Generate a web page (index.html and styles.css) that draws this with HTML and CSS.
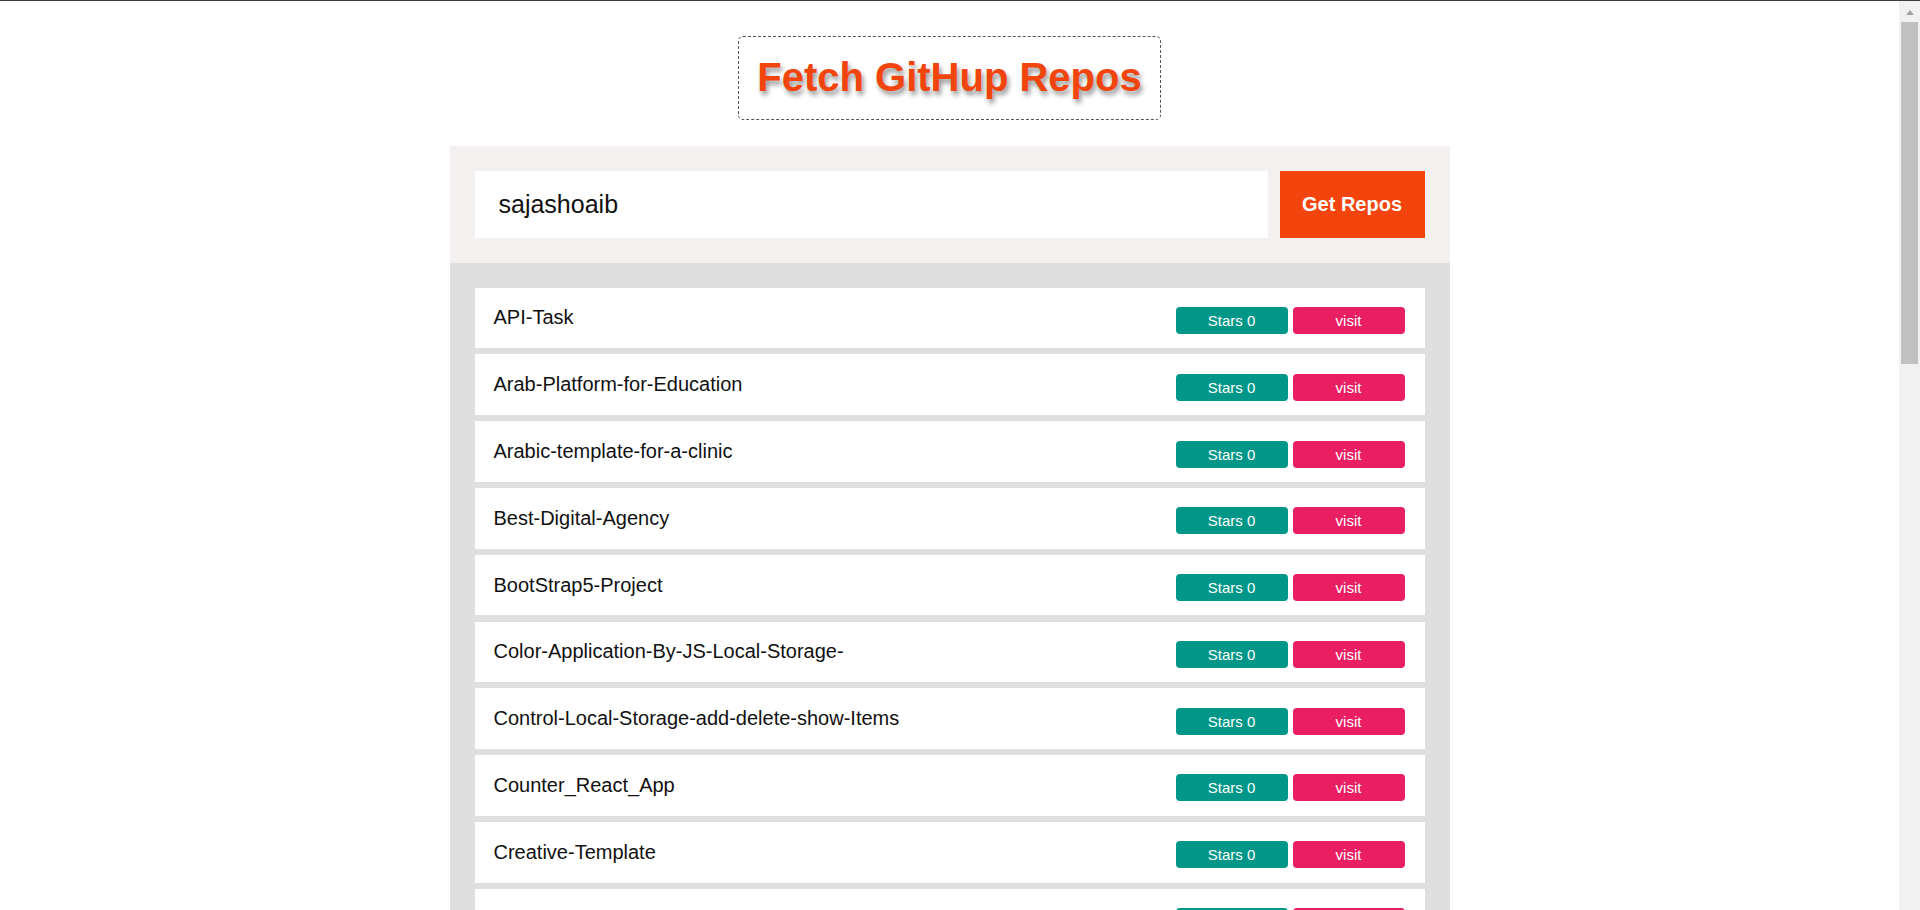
FILE: index.html
```html
<!DOCTYPE html>
<html lang="en">
<head>
<meta charset="UTF-8">
<title>Fetch GitHup Repos</title>
<link rel="stylesheet" href="styles.css">
</head>
<body>
<div class="scrollbar" aria-hidden="true">
  <span class="scroll-arrow"></span>
  <span class="scroll-thumb"></span>
</div>
<header class="header">
  <h1 class="title">Fetch GitHup Repos</h1>
</header>
<main class="container">
  <div class="get-repos">
    <input class="username" type="text" value="sajashoaib">
    <span class="get-button">Get Repos</span>
  </div>
  <div class="show-data">
    <div class="repo-box"><span class="repo-name">API-Task</span><div class="repo-actions"><span class="stars">Stars 0</span><a class="visit">visit</a></div></div>
    <div class="repo-box"><span class="repo-name">Arab-Platform-for-Education</span><div class="repo-actions"><span class="stars">Stars 0</span><a class="visit">visit</a></div></div>
    <div class="repo-box"><span class="repo-name">Arabic-template-for-a-clinic</span><div class="repo-actions"><span class="stars">Stars 0</span><a class="visit">visit</a></div></div>
    <div class="repo-box"><span class="repo-name">Best-Digital-Agency</span><div class="repo-actions"><span class="stars">Stars 0</span><a class="visit">visit</a></div></div>
    <div class="repo-box"><span class="repo-name">BootStrap5-Project</span><div class="repo-actions"><span class="stars">Stars 0</span><a class="visit">visit</a></div></div>
    <div class="repo-box"><span class="repo-name">Color-Application-By-JS-Local-Storage-</span><div class="repo-actions"><span class="stars">Stars 0</span><a class="visit">visit</a></div></div>
    <div class="repo-box"><span class="repo-name">Control-Local-Storage-add-delete-show-Items</span><div class="repo-actions"><span class="stars">Stars 0</span><a class="visit">visit</a></div></div>
    <div class="repo-box"><span class="repo-name">Counter_React_App</span><div class="repo-actions"><span class="stars">Stars 0</span><a class="visit">visit</a></div></div>
    <div class="repo-box"><span class="repo-name">Creative-Template</span><div class="repo-actions"><span class="stars">Stars 0</span><a class="visit">visit</a></div></div>
    <div class="repo-box"><span class="repo-name">Digital-Clock</span><div class="repo-actions"><span class="stars">Stars 0</span><a class="visit">visit</a></div></div>
    <div class="repo-box"><span class="repo-name">E-commerce-Landing-Page</span><div class="repo-actions"><span class="stars">Stars 0</span><a class="visit">visit</a></div></div>
    <div class="repo-box"><span class="repo-name">Fetch-GitHub-Repos</span><div class="repo-actions"><span class="stars">Stars 0</span><a class="visit">visit</a></div></div>
    <div class="repo-box"><span class="repo-name">Form-Validation</span><div class="repo-actions"><span class="stars">Stars 0</span><a class="visit">visit</a></div></div>
    <div class="repo-box"><span class="repo-name">Image-Slider</span><div class="repo-actions"><span class="stars">Stars 0</span><a class="visit">visit</a></div></div>
    <div class="repo-box"><span class="repo-name">Kasper-Template</span><div class="repo-actions"><span class="stars">Stars 0</span><a class="visit">visit</a></div></div>
    <div class="repo-box"><span class="repo-name">Landing-Page</span><div class="repo-actions"><span class="stars">Stars 0</span><a class="visit">visit</a></div></div>
    <div class="repo-box"><span class="repo-name">Leon-Template</span><div class="repo-actions"><span class="stars">Stars 0</span><a class="visit">visit</a></div></div>
    <div class="repo-box"><span class="repo-name">Memory-Game</span><div class="repo-actions"><span class="stars">Stars 0</span><a class="visit">visit</a></div></div>
    <div class="repo-box"><span class="repo-name">Portfolio</span><div class="repo-actions"><span class="stars">Stars 0</span><a class="visit">visit</a></div></div>
    <div class="repo-box"><span class="repo-name">Quiz-App</span><div class="repo-actions"><span class="stars">Stars 0</span><a class="visit">visit</a></div></div>
    <div class="repo-box"><span class="repo-name">React-Todo-App</span><div class="repo-actions"><span class="stars">Stars 0</span><a class="visit">visit</a></div></div>
    <div class="repo-box"><span class="repo-name">Responsive-Website</span><div class="repo-actions"><span class="stars">Stars 0</span><a class="visit">visit</a></div></div>
    <div class="repo-box"><span class="repo-name">Sass-Project</span><div class="repo-actions"><span class="stars">Stars 0</span><a class="visit">visit</a></div></div>
    <div class="repo-box"><span class="repo-name">Shopping-Cart</span><div class="repo-actions"><span class="stars">Stars 0</span><a class="visit">visit</a></div></div>
    <div class="repo-box"><span class="repo-name">Special-Design</span><div class="repo-actions"><span class="stars">Stars 0</span><a class="visit">visit</a></div></div>
    <div class="repo-box"><span class="repo-name">Tailwind-Project</span><div class="repo-actions"><span class="stars">Stars 0</span><a class="visit">visit</a></div></div>
    <div class="repo-box"><span class="repo-name">Templates-Zero</span><div class="repo-actions"><span class="stars">Stars 0</span><a class="visit">visit</a></div></div>
    <div class="repo-box"><span class="repo-name">Todo-List</span><div class="repo-actions"><span class="stars">Stars 0</span><a class="visit">visit</a></div></div>
    <div class="repo-box"><span class="repo-name">Typing-Speed-Game</span><div class="repo-actions"><span class="stars">Stars 0</span><a class="visit">visit</a></div></div>
    <div class="repo-box"><span class="repo-name">Weather-App</span><div class="repo-actions"><span class="stars">Stars 0</span><a class="visit">visit</a></div></div>
  </div>
</main>
</body>
</html>
```
FILE: styles.css
```css
html {
  border-top: 1px solid #3b3b3b;
}
* {
  box-sizing: border-box;
}
body {
  margin: 0;
  padding-right: 21px;
  font-family: "Liberation Sans", Arial, sans-serif;
  background: #ffffff;
  color: #111;
}

/* window scrollbar drawn over the page edge */
.scrollbar {
  position: fixed;
  top: 1px;
  right: 0;
  bottom: 0;
  width: 21px;
  display: flex;
  flex-direction: column;
  align-items: center;
  padding-top: 9px;
  background: #f1f1f1;
  z-index: 10;
}
.scroll-arrow {
  width: 0;
  height: 0;
  border-left: 4.5px solid transparent;
  border-right: 4.5px solid transparent;
  border-bottom: 5px solid #a3a3a3;
}
.scroll-thumb {
  width: 17px;
  height: 342px;
  margin-top: 7px;
  background: #c1c1c1;
}

.header {
  display: flex;
  justify-content: center;
  padding-top: 35px;
  margin-bottom: 26px;
}
.title {
  margin: 0;
  padding: 18px 18px 19px;
  font-size: 40px;
  font-weight: bold;
  line-height: normal;
  color: #f2450d;
  border: 1px dashed #555;
  border-radius: 5px;
  text-shadow: 2px 4px 5px rgba(0, 0, 0, 0.42);
}
.container {
  width: 1000px;
  margin: 0 auto;
}
.get-repos {
  display: flex;
  gap: 12px;
  padding: 25px;
  background: #f3f0ef;
}
.username {
  flex: 1;
  height: 66.7px;
  border: none;
  outline: none;
  padding: 0 24px;
  font-family: "Liberation Sans", Arial, sans-serif;
  font-size: 25px;
  color: #111;
  background: #fff;
}
.get-button {
  width: 145px;
  display: flex;
  align-items: center;
  justify-content: center;
  background: #f2440c;
  color: #fff;
  font-size: 20px;
  font-weight: bold;
}
.show-data {
  padding: 25px;
  background: #dfdfdf;
}
.repo-box {
  display: flex;
  align-items: center;
  justify-content: space-between;
  height: 60.6px;
  padding: 0 20px 0 19px;
  margin-bottom: 6.2px;
  background: #fff;
}
.repo-box:last-child {
  margin-bottom: 0;
}
.repo-name {
  font-size: 20px;
  color: #111;
}
.repo-actions {
  display: flex;
  gap: 5px;
  margin-top: 5px;
}
.stars,
.visit {
  width: 112px;
  height: 27px;
  display: flex;
  align-items: center;
  justify-content: center;
  border-radius: 4px;
  color: #fff;
  font-size: 15px;
}
.stars {
  background: #009688;
}
.visit {
  background: #e91e63;
}
```
